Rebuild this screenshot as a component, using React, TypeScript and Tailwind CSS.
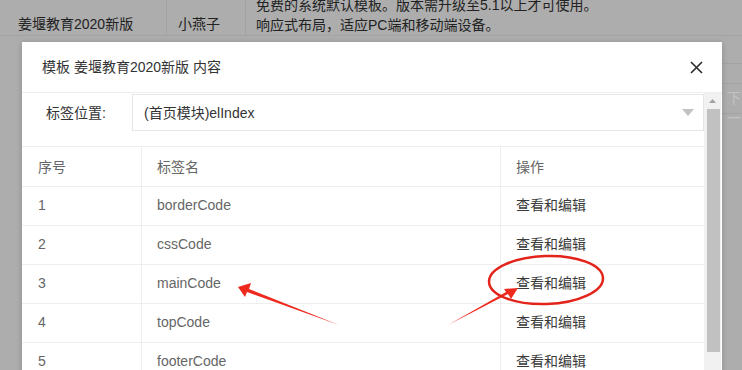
import React from 'react';

const font = { fontFamily: '"Liberation Sans", "Noto Sans CJK SC", sans-serif' };

const rows = [
  { id: 1, name: 'borderCode' },
  { id: 2, name: 'cssCode' },
  { id: 3, name: 'mainCode' },
  { id: 4, name: 'topCode' },
  { id: 5, name: 'footerCode' },
];

const Annotations: React.FC = () => (
  <svg className="absolute left-0 top-0 pointer-events-none" width={742} height={370} viewBox="0 0 742 370">
    {/* arrow to mainCode */}
    <polygon points="339,325 249,289 251,283 238,287 245,297 247,292" fill="#ee2a1f" />
    {/* arrow to the link */}
    <polygon points="448,325 508,294 511,299 518,288 504,289 506,292" fill="#ee2a1f" />
    {/* circle around the link */}
    <ellipse cx={546} cy={280} rx={57} ry={24} fill="none" stroke="#e3241b" strokeWidth={2.5} transform="rotate(-2 546 280)" />
  </svg>
);

const App: React.FC = () => {
  return (
    <div className="relative w-[742px] h-[370px] overflow-hidden bg-[#adadad] text-sm" style={font}>
      {/* page behind the shade */}
      <div className="flex h-[36px] border-b border-[#a3a3a3] text-[#222]">
        <div className="w-[167px] pl-[18px] pt-[14px] border-r border-[#a3a3a3]">姜堰教育2020新版</div>
        <div className="w-[79px] pl-[11px] pt-[14px] border-r border-[#a3a3a3]">小燕子</div>
        <div className="pl-[10px] leading-[20px] -mt-[5px]">
          <div>免费的系统默认模板。版本需升级至5.1以上才可使用。</div>
          <div>响应式布局，适应PC端和移动端设备。</div>
        </div>
      </div>
      <div className="absolute right-0 top-[63px] w-[20px] flex flex-col">
        <div className="h-[20px] border-t border-[#a3a3a3]" />
        <div className="h-[30px] border-t border-[#a3a3a3] pl-[5px] pt-[4px] text-[#c4c4c4]">下一</div>
        <div className="border-t border-[#a3a3a3]" />
      </div>

      {/* modal */}
      <div className="absolute left-[22px] top-[42px] w-[700px] h-[340px] bg-white shadow-[0_1px_6px_rgba(0,0,0,0.2)] flex flex-col">
        <div className="h-[51px] shrink-0 flex items-center justify-between pl-5 pr-[19px] border-b border-[#eeeeee] text-[#333]">
          <span>模板 姜堰教育2020新版 内容</span>
          <svg width="13" height="13" viewBox="0 0 13 13">
            <path d="M1 1 L12 12 M12 1 L1 12" stroke="#2a2a2a" strokeWidth="1.6" />
          </svg>
        </div>
        <div className="flex flex-1 min-h-0">
          <div className="w-[682px] flex flex-col">
            <div className="flex items-center h-[37px] mt-[1px]">
              <div className="w-[110px] pl-6 text-[#333]">标签位置:</div>
              <div className="flex-1 h-[37px] border border-[#e6e6e6] flex items-center justify-between pl-[11px] pr-[9px] text-[#333]">
                <span>(首页模块)elIndex</span>
                <svg width="12" height="7" viewBox="0 0 12 7">
                  <path d="M0 0 L12 0 L6 7 Z" fill="#c2c2c2" />
                </svg>
              </div>
            </div>
            <div className="mt-[15px] border-t border-[#eeeeee]">
              <div className="flex h-[40px] border-b border-[#eeeeee] text-[#666]">
                <div className="w-[120px] pl-4 flex items-center border-r border-[#eeeeee]">序号</div>
                <div className="w-[359px] pl-[15px] flex items-center border-r border-[#eeeeee]">标签名</div>
                <div className="flex-1 pl-[15px] flex items-center">操作</div>
              </div>
              {rows.map((r) => (
                <div key={r.id} className="flex h-[39px] border-b border-[#eeeeee]">
                  <div className="w-[120px] pl-4 pb-[2px] flex items-center border-r border-[#eeeeee] text-[#666]">{r.id}</div>
                  <div className="w-[359px] pl-[15px] pb-[2px] flex items-center border-r border-[#eeeeee] text-[#666]">{r.name}</div>
                  <div className="flex-1 pl-[15px] pb-[2px] flex items-center text-[#3a3a3a]">查看和编辑</div>
                </div>
              ))}
            </div>
          </div>
          {/* scrollbar */}
          <div className="w-[17px] bg-[#f1f1f1] flex flex-col items-center">
            <svg className="mt-[6px]" width="7" height="4" viewBox="0 0 7 4">
              <path d="M0 4 L7 4 L3.5 0 Z" fill="#a3a3a3" />
            </svg>
            <div className="mt-[6px] w-[13px] h-[243px] bg-[#c1c1c1] ml-[1px]" />
          </div>
        </div>
      </div>

      <Annotations />
    </div>
  );
};

export default App;
